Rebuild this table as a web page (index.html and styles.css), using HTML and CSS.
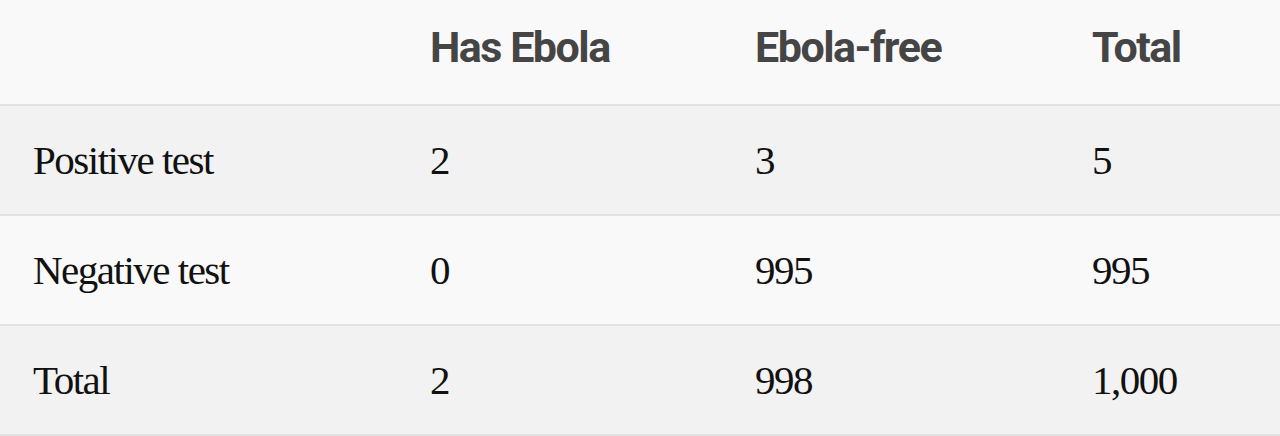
FILE: index.html
```html
<!DOCTYPE html>
<html>
<head>
<meta charset="utf-8">
<link rel="stylesheet" href="styles.css">
</head>
<body>
<table class="grid">
  <colgroup>
    <col class="c0"><col class="c1"><col class="c2"><col class="c3">
  </colgroup>
  <thead>
    <tr class="head">
      <th></th><th>Has Ebola</th><th>Ebola-free</th><th>Total</th>
    </tr>
  </thead>
  <tbody>
    <tr class="odd"><td>Positive test</td><td>2</td><td>3</td><td>5</td></tr>
    <tr class="even"><td>Negative test</td><td>0</td><td>995</td><td>995</td></tr>
    <tr class="odd"><td>Total</td><td>2</td><td>998</td><td>1,000</td></tr>
  </tbody>
</table>
</body>
</html>
```
FILE: styles.css
```css
html, body {
  margin: 0;
  padding: 0;
  background: #f9f9f9;
}
.grid {
  width: 1280px;
  border-collapse: collapse;
  table-layout: fixed;
}
.c0 { width: 397px; }
.c1 { width: 325px; }
.c2 { width: 337px; }
.c3 { width: 221px; }
.grid th, .grid td {
  text-align: left;
  vertical-align: middle;
  padding: 0 0 0 33px;
  border-bottom: 2px solid #e3e3e3;
}
.head th {
  height: 105px;
  box-sizing: border-box;
  background: #f9f9f9;
  font-family: "Roboto", "Liberation Sans", sans-serif;
  font-weight: 700;
  font-size: 43px;
  letter-spacing: -1.5px;
  color: #454545;
  padding-bottom: 11px;
}
.grid td {
  height: 108px;
  font-family: "Liberation Serif", serif;
  font-size: 41px;
  letter-spacing: -1.5px;
  color: #111;
}
.odd td { background: #f2f2f2; }
.even td { background: #f9f9f9; }
```
